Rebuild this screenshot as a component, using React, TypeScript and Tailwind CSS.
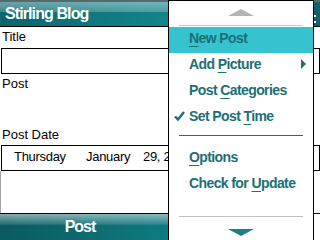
import React from 'react';

const font = "font-['Liberation_Sans',Arial,sans-serif]";

function Key({ children }: { children: React.ReactNode }) {
  return <span className="underline decoration-1 underline-offset-[3px]">{children}</span>;
}

interface ItemProps {
  children: React.ReactNode;
  active?: boolean;
  checked?: boolean;
  sub?: boolean;
}

function MenuItem({ children, active, checked, sub }: ItemProps) {
  return (
    <div
      className={`relative h-[26px] pt-[2px] pl-[20px] leading-[18px] text-[14px] font-bold tracking-[-0.6px] text-[#1c6f76] ${
        active ? 'bg-[#36c3d0]' : ''
      }`}
    >
      {checked && (
        <svg className="absolute left-[5px] top-[6px]" width="11" height="10" viewBox="0 0 11 10">
          <path d="M1 5.5 L4 8.5 L10 1" fill="none" stroke="#1c6f76" strokeWidth="2.4" />
        </svg>
      )}
      {children}
      {sub && (
        <svg className="absolute right-[7px] top-[6px]" width="5" height="10" viewBox="0 0 5 10">
          <path d="M0 0 L5 5 L0 10 Z" fill="#1c6f76" />
        </svg>
      )}
    </div>
  );
}

export default function App() {
  return (
    <div className={`relative w-[320px] h-[240px] overflow-hidden bg-white ${font}`}>
      <div className="flex flex-col h-full">
        {/* Title bar */}
        <div className="h-[27px] shrink-0 flex border-t-[2px] border-t-[#56696b] border-b border-b-black bg-[linear-gradient(to_bottom,rgba(255,255,255,0.4)_0%,rgba(255,255,255,0.22)_42%,rgba(255,255,255,0)_43%),linear-gradient(to_right,#0b666b,#1aa2aa)]">
          <div className="flex-1 pl-[5px] text-white font-bold text-[16px] leading-[23px] tracking-[-0.9px]">
            Stirling Blog
          </div>
          <div className="w-[6px] bg-[#17606a] flex flex-col pt-[13px] gap-[4px]">
            <div className="w-[2px] h-[2px] bg-white" />
            <div className="w-[2px] h-[2px] bg-white" />
          </div>
        </div>

        {/* Form */}
        <div className="flex-1 flex flex-col text-black text-[13px] leading-[15px]">
          <div className="pt-[2px] pl-[2px]">Title</div>
          <div className="mt-[4px] h-[26px] border border-black ml-[1px]" />
          <div className="mt-[2px] pl-[2px]">Post</div>
          <div className="mt-[36px] pl-[2px]">Post Date</div>
          <div className="mt-[3px] h-[26px] border border-black ml-[1px] pt-[3px] pl-[12px] tracking-[-0.3px]">
            <div className="w-[155px] flex overflow-hidden whitespace-nowrap">
              <span className="w-[72px] shrink-0">Thursday</span>
              <span className="w-[57px] shrink-0">January</span>
              <span className="shrink-0">29, 2009</span>
            </div>
          </div>
          <div className="flex-1 border-l border-l-[#a0a0a0]" />
        </div>

        {/* Soft key bar */}
        <div className="h-[27px] shrink-0 flex border-t border-t-black">
          <div className="flex-1 flex bg-[linear-gradient(to_bottom,rgba(255,255,255,0.5)_0%,rgba(255,255,255,0.12)_40%,rgba(255,255,255,0)_42%),linear-gradient(to_right,#0a5a5e,#1596a0)]">
            <div className="w-[160px] flex items-center justify-center text-white font-bold text-[16px] tracking-[-1px]">
              Post
            </div>
          </div>
          <div className="w-[6px] bg-white" />
        </div>
      </div>

      {/* Popup menu */}
      <div className="absolute left-[168px] top-0 bottom-0 w-[146px] bg-white border-x border-t border-black flex flex-col">
        <div className="h-[24px] flex justify-center pt-[8px]">
          <svg width="26" height="7" viewBox="0 0 26 7">
            <path d="M0 7 L13 0 L26 7 Z" fill="#b4b4b4" />
          </svg>
        </div>
        <div className="mx-[10px] h-[1px] bg-[#c4cccc]" />
        <div className="h-[1px]" />
        <MenuItem active>
          <Key>N</Key>ew Post
        </MenuItem>
        <MenuItem sub>
          Add <Key>P</Key>icture
        </MenuItem>
        <MenuItem>
          Post <Key>C</Key>ategories
        </MenuItem>
        <MenuItem checked>
          Set Post <Key>T</Key>ime
        </MenuItem>
        <div className="h-[15px] pt-[4px] px-[10px]">
          <div className="h-[1px] bg-[#1c6f76]" />
        </div>
        <MenuItem>
          <Key>O</Key>ptions
        </MenuItem>
        <MenuItem>
          Check for <Key>U</Key>pdate
        </MenuItem>
        <div className="h-[18px]" />
        <div className="mx-[10px] h-[1px] bg-[#c0c0c0]" />
        <div className="flex justify-center pt-[12px]">
          <svg width="26" height="7" viewBox="0 0 26 7">
            <path d="M0 0 L26 0 L13 7 Z" fill="#1f7d84" />
          </svg>
        </div>
      </div>
    </div>
  );
}
